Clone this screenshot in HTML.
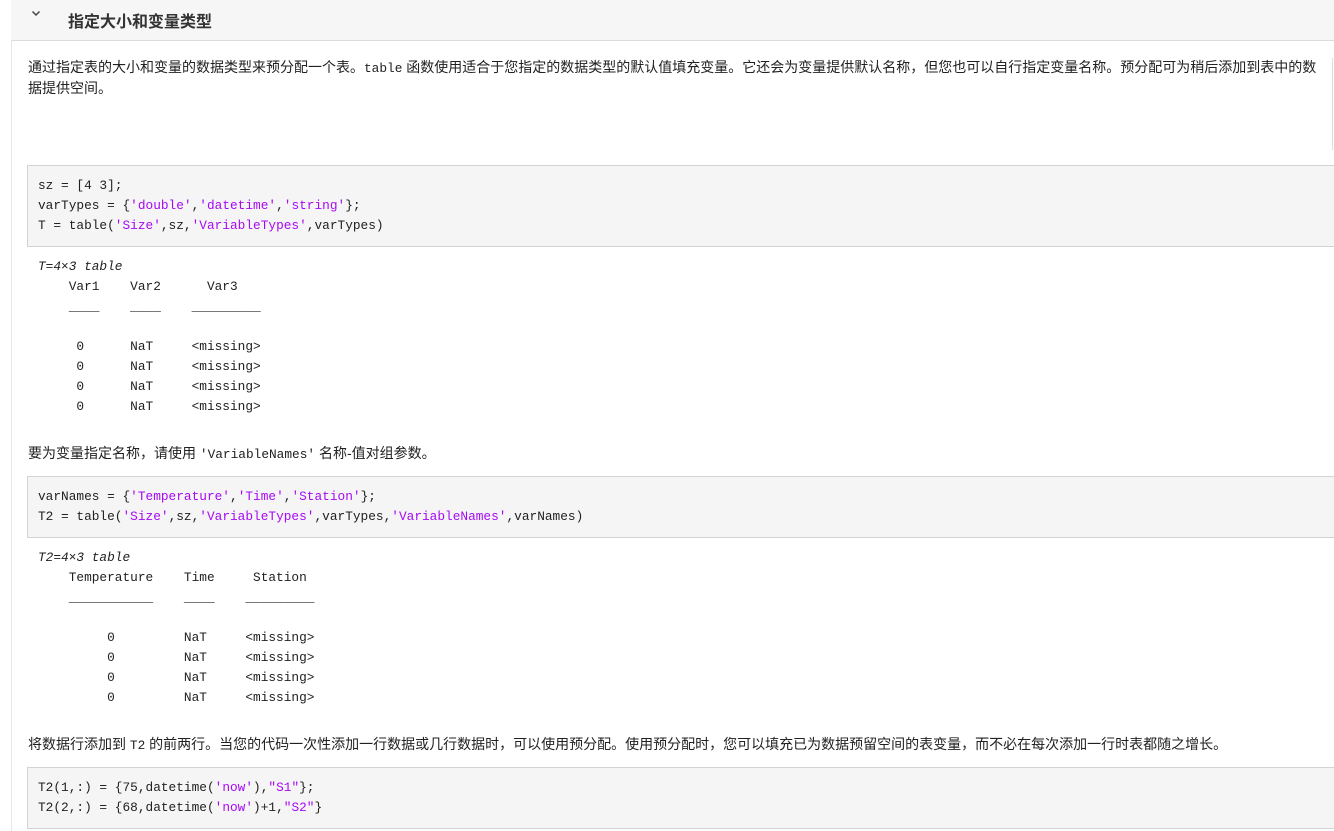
<!DOCTYPE html>
<html><head><meta charset="utf-8"><style>
body{margin:0;width:1334px;height:831px;overflow:hidden;background:#fff;position:relative;font-family:"Liberation Sans","Noto Sans CJK SC",sans-serif;color:#212121}
.abs{position:absolute;white-space:pre}
.hdr{position:absolute;left:11px;top:0;width:1323px;height:40px;background:#f6f6f6;border-bottom:1px solid #dcdcdc}
.vl{position:absolute;left:11px;top:0;width:1px;height:831px;background:#e6e6e6}
.p{font-size:14px;line-height:19px;position:absolute;left:28px}
.code{position:absolute;left:27px;width:1320px;background:#f5f5f5;border:1px solid #d3d3d3;box-sizing:border-box}
.m{font-family:"Liberation Mono",monospace;font-size:12.8px;line-height:20px}
.s{color:#a709f5}
</style></head><body>
<div class="vl"></div>
<div class="hdr"></div>
<svg class="abs" style="left:31px;top:9px" width="10" height="8"><path d="M1.5 2.5 L5 6 L8.5 2.5" stroke="#444" stroke-width="1.5" fill="none"/></svg>
<div class="abs" style="left:68px;top:8px;font-size:16px;font-weight:bold;color:#333">指定大小和变量类型</div>
<div style="position:absolute;left:1332px;top:58px;width:1px;height:92px;background:#ddd"></div>
<div class="p" style="top:58px;width:1292px">通过指定表的大小和变量的数据类型来预分配一个表。<span class="m">table</span> 函数使用适合于您指定的数据类型的默认值填充变量。它还会为变量提供默认名称，但您也可以自行指定变量名称。预分配可为稍后添加到表中的数据提供空间。</div>

<div class="code" style="top:165px;height:82px"></div>
<div class="abs m" style="left:38px;top:176px">sz = [4 3];
varTypes = {<span class="s">'double'</span>,<span class="s">'datetime'</span>,<span class="s">'string'</span>};
T = table(<span class="s">'Size'</span>,sz,<span class="s">'VariableTypes'</span>,varTypes)</div>

<div class="abs m" style="left:38px;top:257px"><i>T=4×3 table</i>
    Var1    Var2      Var3   
    ____    ____    _________

     0      NaT     &lt;missing&gt;
     0      NaT     &lt;missing&gt;
     0      NaT     &lt;missing&gt;
     0      NaT     &lt;missing&gt;</div>

<div class="p" style="top:444px">要为变量指定名称，请使用 <span class="m">'VariableNames'</span> 名称-值对组参数。</div>

<div class="code" style="top:476px;height:62px"></div>
<div class="abs m" style="left:38px;top:487px">varNames = {<span class="s">'Temperature'</span>,<span class="s">'Time'</span>,<span class="s">'Station'</span>};
T2 = table(<span class="s">'Size'</span>,sz,<span class="s">'VariableTypes'</span>,varTypes,<span class="s">'VariableNames'</span>,varNames)</div>

<div class="abs m" style="left:38px;top:548px"><i>T2=4×3 table</i>
    Temperature    Time     Station 
    ___________    ____    _________

         0         NaT     &lt;missing&gt;
         0         NaT     &lt;missing&gt;
         0         NaT     &lt;missing&gt;
         0         NaT     &lt;missing&gt;</div>

<div class="p" style="top:735px">将数据行添加到 <span class="m">T2</span> 的前两行。当您的代码一次性添加一行数据或几行数据时，可以使用预分配。使用预分配时，您可以填充已为数据预留空间的表变量，而不必在每次添加一行时表都随之增长。</div>

<div class="code" style="top:767px;height:62px"></div>
<div class="abs m" style="left:38px;top:778px">T2(1,:) = {75,datetime(<span class="s">'now'</span>),<span class="s">"S1"</span>};
T2(2,:) = {68,datetime(<span class="s">'now'</span>)+1,<span class="s">"S2"</span>}</div>
</body></html>
